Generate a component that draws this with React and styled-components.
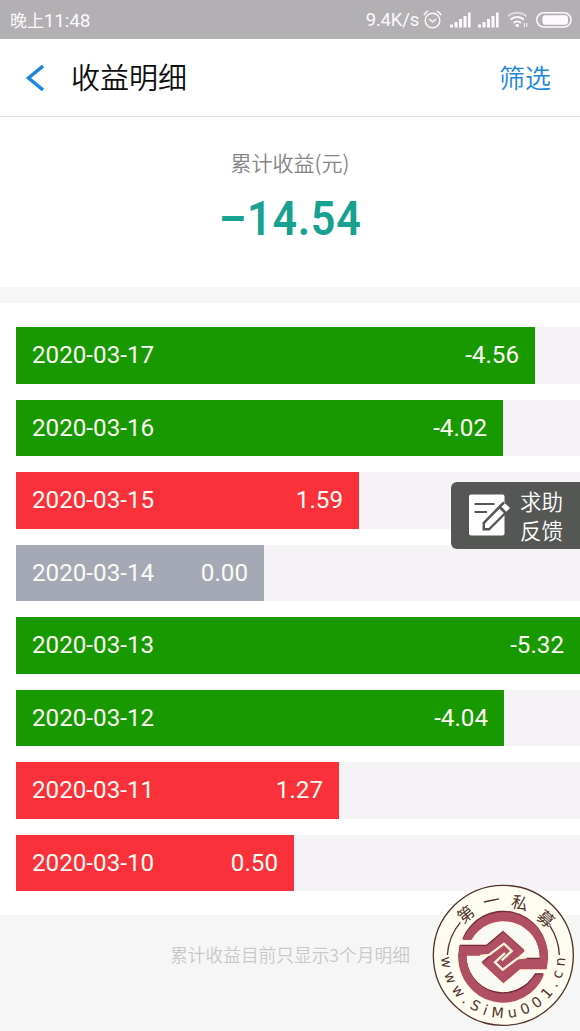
import React from "react";
import styled, { createGlobalStyle } from "styled-components";

const GlobalStyle = createGlobalStyle`
* {
    box-sizing: border-box;
}
body {
    margin: 0;
    background: #f6f6f6;
    font-family: Roboto, "Noto Sans CJK SC", sans-serif;
}
`
const Page = styled.div`
position: relative;
width: 580px;
height: 1031px;
overflow: hidden;
display: flex;
flex-direction: column;
`
const StatusBar = styled.div`
flex: none;
height: 39px;
padding: 0 8px 0 10px;
display: flex;
align-items: center;
justify-content: space-between;
background: #b3b0b4;
color: #fbf9fc;
font-size: 18px;
font-weight: 400;
`
const StatusTime = styled.div`
font-family: "Noto Sans CJK SC", sans-serif;
font-size: 17px;
font-weight: 400;
letter-spacing: -0.1px;
display: flex;
align-items: center;
`
const Clock = styled.span`
font-family: Roboto, sans-serif;
font-weight: 400;
font-size: 19px;
letter-spacing: -0.2px;
padding-top: 1px;
`
const StatusIcons = styled.div`
display: flex;
align-items: center;
`
const SignalGroup = styled.div`
display: flex;
gap: 7px;
margin: 0 8px;
`
const Speed = styled.div`
font-size: 18.5px;
letter-spacing: -0.2px;
margin-right: 4px;
`
const NavBar = styled.div`
flex: none;
height: 78px;
padding: 0 29px 0 25px;
display: flex;
align-items: center;
background: #fff;
border-bottom: 1px solid #dfdfdf;
font-family: "Noto Sans CJK SC", sans-serif;
font-weight: 350;
`
const Title = styled.div`
margin: 0 auto 4px 27px;
font-size: 29px;
line-height: 40px;
color: #0d0d0d;
`
const Filter = styled.div`
font-size: 26px;
line-height: 40px;
margin-bottom: 2px;
color: #1c87dc;
`
const Summary = styled.div`
flex: none;
height: 170px;
display: flex;
flex-direction: column;
align-items: center;
padding-top: 30px;
background: #fff;
`
const SummaryLabel = styled.div`
font-family: "Noto Sans CJK SC", sans-serif;
font-weight: 350;
font-size: 21px;
line-height: 30px;
color: #858585;
`
const SummaryValue = styled.div`
display: flex;
font-size: 49px;
line-height: 60px;
margin-top: 12px;
font-weight: 600;
letter-spacing: 0.9px;
transform: scaleX(0.88);
color: #17a191;
`
const List = styled.div`
flex: none;
height: 612px;
margin-top: 16px;
padding: 24px 0 0 16px;
display: flex;
flex-direction: column;
gap: 16px;
background: #fff;
`
const Track = styled.div`
flex: none;
height: 56.5px;
background: #f6f3f7;
`
const barColors = {
    loss: "#199900",
    gain: "#fa313a",
    flat: "#a5a9b5",
}
const Bar = styled.div`
height: 100%;
padding: 0 16px;
display: flex;
align-items: center;
justify-content: space-between;
font-size: 24.2px;
color: #fbfbf3;
background: ${props => barColors[props.$kind]};
`
const Footer = styled.div`
padding-top: 26px;
text-align: center;
font-family: "Noto Sans CJK SC", sans-serif;
font-weight: 350;
font-size: 17.7px;
line-height: 26px;
color: #c9c9c9;
`
const Feedback = styled.div`
position: absolute;
right: 0;
top: 482px;
width: 129px;
height: 67px;
padding: 0 0 2px 18px;
display: flex;
align-items: center;
gap: 9px;
border-radius: 6px 0 0 6px;
background: #555754;
color: #fff;
font-family: "Noto Sans CJK SC", sans-serif;
font-weight: 350;
font-size: 21.5px;
line-height: 29px;
`
const SealBox = styled.div`
position: absolute;
left: 425px;
top: 880px;
width: 155px;
height: 151px;
`

const records = [
    { date: "2020-03-17", value: "-4.56", kind: "loss", width: 519 },
    { date: "2020-03-16", value: "-4.02", kind: "loss", width: 487 },
    { date: "2020-03-15", value: "1.59", kind: "gain", width: 343 },
    { date: "2020-03-14", value: "0.00", kind: "flat", width: 248 },
    { date: "2020-03-13", value: "-5.32", kind: "loss", width: 564 },
    { date: "2020-03-12", value: "-4.04", kind: "loss", width: 488 },
    { date: "2020-03-11", value: "1.27", kind: "gain", width: 323 },
    { date: "2020-03-10", value: "0.50", kind: "gain", width: 278 },
]

const AlarmIcon = () => (
    <svg width="19" height="20" viewBox="0 0 19 20" fill="none" stroke="#fbf9fc" strokeWidth="1.5" strokeLinecap="round">
        <circle cx="9.5" cy="10.5" r="7.3" />
        <path d="M6.6 9.5l2.9 2.4 3.2-2.4M1.2 4.6A8 8 0 0 1 4.6 1.4M14.4 1.4a8 8 0 0 1 3.4 3.2" />
    </svg>
)

const SignalIcon = () => (
    <svg width="21" height="16" viewBox="0 0 21 16" fill="#fbf9fc">
        <rect x="0" y="12.5" width="3" height="3" />
        <rect x="4.5" y="10" width="3" height="5.5" />
        <rect x="9" y="7" width="3" height="8.5" />
        <rect x="13.5" y="4" width="3" height="11.5" />
        <rect x="18" y="0.5" width="2.6" height="15" />
    </svg>
)

const WifiIcon = () => (
    <svg width="22" height="17" viewBox="0 0 22 17" fill="none" stroke="#fbf9fc">
        <path d="M1 5.2a14 14 0 0 1 18.4 0" strokeWidth="1.8" opacity="0.6" />
        <path d="M3.6 8.6a9.6 9.6 0 0 1 13.2 0M6.5 11.9a5.4 5.4 0 0 1 7.4 0" strokeWidth="2" />
        <circle cx="10.2" cy="14.4" r="1.7" fill="#fbf9fc" stroke="none" />
        <path d="M17.3 12v4M19.8 12v4" strokeWidth="1" />
    </svg>
)

const BatteryIcon = () => (
    <svg width="43" height="16" viewBox="-7 0 43 16">
        <rect x="0.8" y="0.8" width="34.2" height="14.2" rx="7" fill="none" stroke="#fbf9fc" strokeWidth="1.5" />
        <rect x="6.5" y="3.2" width="25.5" height="9.6" rx="3" fill="#fbf9fc" />
    </svg>
)

const FeedbackIcon = () => (
    <svg width="42" height="42" viewBox="0 0 42 42">
        <rect x="0" y="0.5" width="35.5" height="41" rx="2" fill="#fff" />
        <path d="M5.500 10h20M5.500 18h12.500" stroke="#555754" strokeWidth="2.2" />
        <path d="M13.500 36.500v-8L34 7.500l8 7.500-21.500 21.500z" fill="#555754" />
        <path d="M16 34v-4.500L30.500 14.800l4.300 4.200-15 15z" fill="#fff" />
        <path d="M32.500 12.800L36 9.300l5 4.700-3.700 3.700z" fill="#fff" />
    </svg>
)

const sealParts = [
    "M113 178A133 135 0 0 1 369 235L345 235A110 110 0 0 0 139 178Z",
    "M357 282A133 135 0 0 1 101 225L125 225A110 110 0 0 0 331 282Z",
    "M105 196L185 196L235 154L299 212L272 235L369 235L365 266L285 266L235 308L171 248L198 225L101 225Z",
]

const Seal = () => (
    <svg width="155" height="151" viewBox="0 0 465 453">
        <circle cx="235" cy="226" r="210" fill="#fffdf2" stroke="#51342b" strokeWidth="4" />
        <circle cx="235" cy="230" r="118" fill="#f9f9f6" />
        <g fill="none" stroke="#51342b" strokeWidth="4">
            <path d="M67 225A168 168 0 0 1 106 127" />
            <path d="M403 225A168 168 0 0 0 374 137" />
        </g>
        <g fill="#fff3d9" stroke="#fff3d9" strokeWidth="9">
            {sealParts.map((d) => <path key={d} d={d} />)}
        </g>
        <g fill="#6e2c3e" transform="translate(-1 -2)">
            {sealParts.map((d) => <path key={d} d={d} />)}
        </g>
        <g fill="#b04e63" transform="translate(0 2)">
            {sealParts.map((d) => <path key={d} d={d} />)}
        </g>
        <g fill="none" stroke="#fff3d9" strokeWidth="7">
            <path d="M165 228L192 225L237 191L260 213L230 241" />
            <path d="M305 232L278 235L233 269L210 247L240 219" />
        </g>
        <g fill="#51342b" fontFamily='"Noto Sans CJK SC", sans-serif' fontSize="50" fontWeight="400" textAnchor="middle">
            <text transform="translate(122 102) rotate(-38)" y="19">第</text>
            <text transform="translate(199 62) rotate(-12)" y="19">一</text>
            <text transform="translate(285 68) rotate(15)" y="19">私</text>
            <text transform="translate(363 116) rotate(42)" y="19">募</text>
        </g>
        <path id="sealArc" d="M49 228A186 186 0 0 0 421 228" fill="none" />
        <text fill="#51342b" fontFamily='"DejaVu Sans", sans-serif' fontSize="43">
            <textPath href="#sealArc" startOffset="3" textLength="576">www.SiMu001.cn</textPath>
        </text>
    </svg>
)

const App = () => {
    return (
        <>
            <GlobalStyle />
            <Page>
                <StatusBar>
                    <StatusTime>晚上<Clock>11:48</Clock></StatusTime>
                    <StatusIcons>
                        <Speed>9.4K/s</Speed>
                        <AlarmIcon />
                        <SignalGroup>
                            <SignalIcon />
                            <SignalIcon />
                        </SignalGroup>
                        <WifiIcon />
                        <BatteryIcon />
                    </StatusIcons>
                </StatusBar>
                <NavBar>
                    <svg width="19" height="26" viewBox="0 0 19 26" fill="none" stroke="#1c87dc" strokeWidth="3.4">
                        <path d="M18 1L3.500 13l14.500 12" />
                    </svg>
                    <Title>收益明细</Title>
                    <Filter>筛选</Filter>
                </NavBar>
                <Summary>
                    <SummaryLabel>累计收益(元)</SummaryLabel>
                    <SummaryValue>–14.54</SummaryValue>
                </Summary>
                <List>
                    {records.map((item) => (
                        <Track key={item.date}>
                            <Bar $kind={item.kind} style={{ width: item.width }}>
                                <div>{item.date}</div>
                                <div>{item.value}</div>
                            </Bar>
                        </Track>
                    ))}
                </List>
                <Footer>累计收益目前只显示3个月明细</Footer>
                <Feedback>
                    <FeedbackIcon />
                    <div>求助<br />反馈</div>
                </Feedback>
                <SealBox>
                    <Seal />
                </SealBox>
            </Page>
        </>
    );
};
export default App;
